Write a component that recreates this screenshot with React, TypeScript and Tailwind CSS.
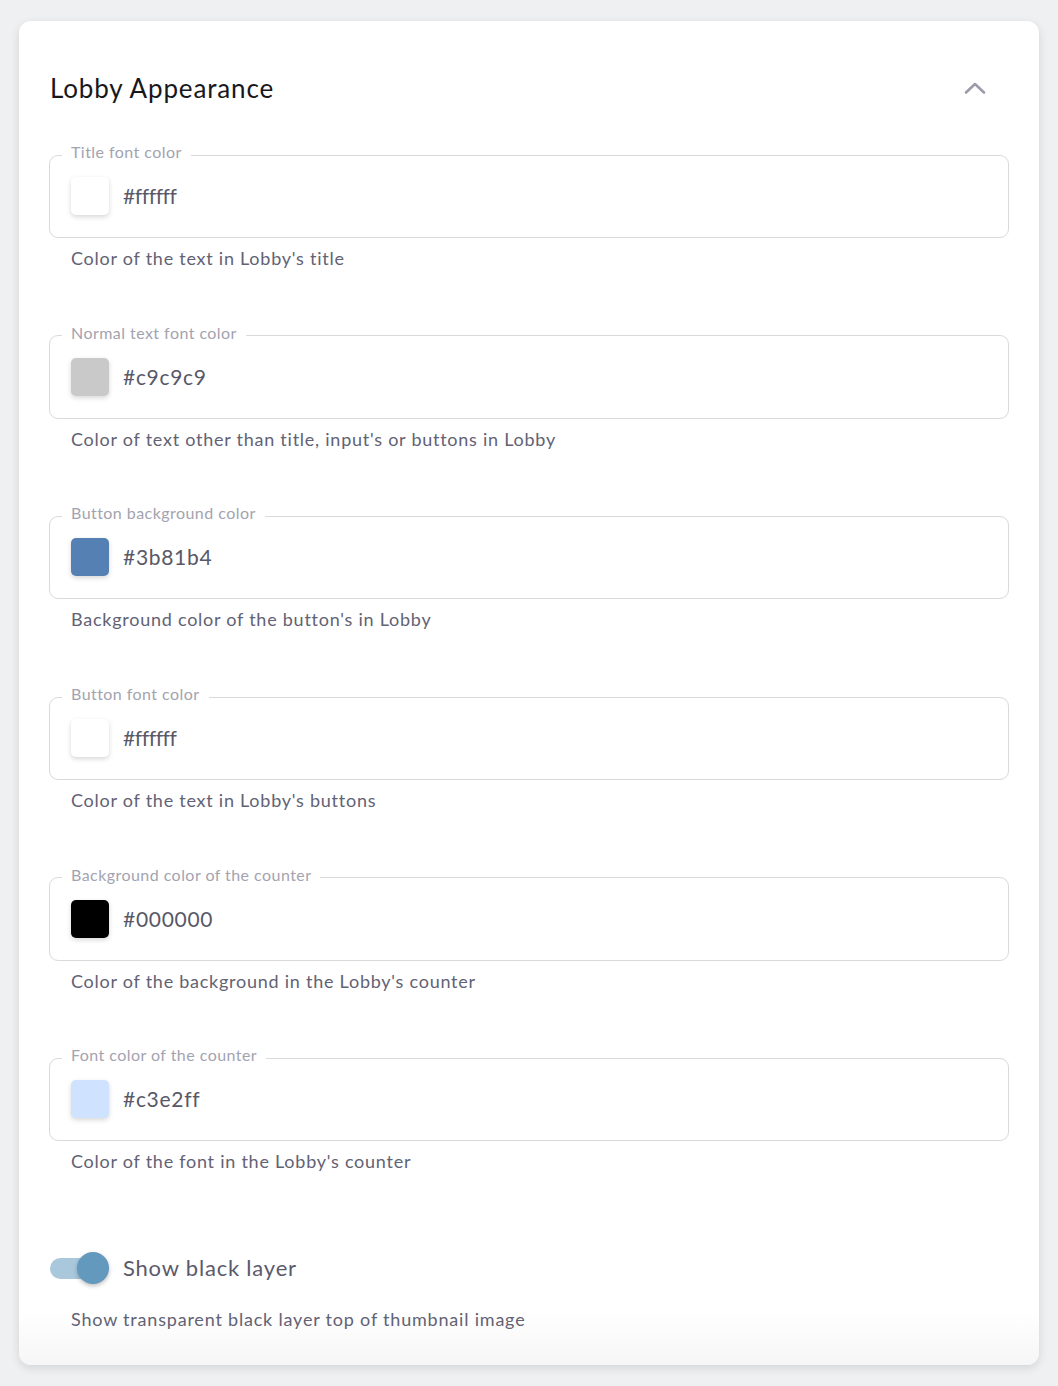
import React from "react";

type Item = { label: string; color: string; value: string; help: string; tight?: boolean };

const items: Item[] = [
  { label: "Title font color", color: "#ffffff", value: "#ffffff", help: "Color of the text in Lobby's title", tight: true },
  { label: "Normal text font color", color: "#c9c9c9", value: "#c9c9c9", help: "Color of text other than title, input's or buttons in Lobby" },
  { label: "Button background color", color: "#5580b4", value: "#3b81b4", help: "Background color of the button's in Lobby" },
  { label: "Button font color", color: "#ffffff", value: "#ffffff", help: "Color of the text in Lobby's buttons", tight: true },
  { label: "Background color of the counter", color: "#000000", value: "#000000", help: "Color of the background in the Lobby's counter" },
  { label: "Font color of the counter", color: "#cfe2ff", value: "#c3e2ff", help: "Color of the font in the Lobby's counter" },
];

function ColorField({ item, last }: { item: Item; last: boolean }) {
  return (
    <div className={last ? "" : "mb-[55.7px]"}>
      <fieldset className="border border-[#d9d9de] rounded-[9px] pl-[21px] pr-4 pt-[12px] pb-[22px]">
        <legend className="ml-[-9px] px-[9px] text-[16px] leading-[20px] text-[#a3a3b0] tracking-[0.45px]">
          <span className="relative top-[-3px]">{item.label}</span>
        </legend>
        <div className="flex items-center">
          <div
            className="w-[38px] h-[38px] rounded-[5px] shadow-[0_2px_5px_rgba(0,0,0,0.16)]"
            style={{ backgroundColor: item.color }}
          />
          <span
            className={
              item.tight
                ? "ml-[14px] text-[21px] leading-[28px] text-[#585868] tracking-[-0.4px]"
                : "ml-[14px] text-[21px] leading-[28px] text-[#585868] tracking-[0.7px]"
            }
          >
            {item.value}
          </span>
        </div>
      </fieldset>
      <p className="mt-[8px] ml-[22px] text-[18px] leading-[24px] text-[#626274] tracking-[0.75px]">{item.help}</p>
    </div>
  );
}

export default function App() {
  return (
    <div
      className="min-h-[1386px] bg-[#eff0f2] pt-[21px] px-[19px]"
      style={{ fontFamily: "Lato, 'Open Sans', sans-serif" }}
    >
      <div className="h-[1344px] rounded-[12px] shadow-[0_3px_10px_rgba(0,0,0,0.12)] bg-linear-to-b from-white from-[96%] to-[#f6f6f7] px-[30px] pt-[51px] overflow-hidden">
        <div className="flex items-center justify-between">
          <h2 className="text-[26px] leading-[32px] text-[#18181c] ml-[1px] tracking-[0.85px]">Lobby Appearance</h2>
          <svg width="22" height="14" viewBox="0 0 22 14" className="mr-[23px]" fill="none">
            <path d="M2 11.5 L11 3 L20 11.5" stroke="#9b9baa" strokeWidth="2.6" strokeLinecap="round" strokeLinejoin="round" />
          </svg>
        </div>
        <div className="mt-[41px]">
          {items.map((it, i) => (
            <ColorField key={i} item={it} last={i === items.length - 1} />
          ))}
        </div>
        <div className="mt-[79px] flex items-center">
          <div className="relative w-[60px] h-[32px] flex items-center ml-[1px]">
            <div className="w-[56px] h-[21px] rounded-full bg-[#a9c8dc]" />
            <div className="absolute left-[27px] top-0 w-[32px] h-[32px] rounded-full bg-[#6399bc] shadow-[0_2px_4px_rgba(0,0,0,0.25)]" />
          </div>
          <span className="ml-[13px] text-[22px] leading-[30px] text-[#5a5a6c] tracking-[0.8px]">Show black layer</span>
        </div>
        <p className="mt-[23px] ml-[22px] text-[18px] leading-[24px] text-[#626274] tracking-[0.8px]">
          Show transparent black layer top of thumbnail image
        </p>
      </div>
    </div>
  );
}
